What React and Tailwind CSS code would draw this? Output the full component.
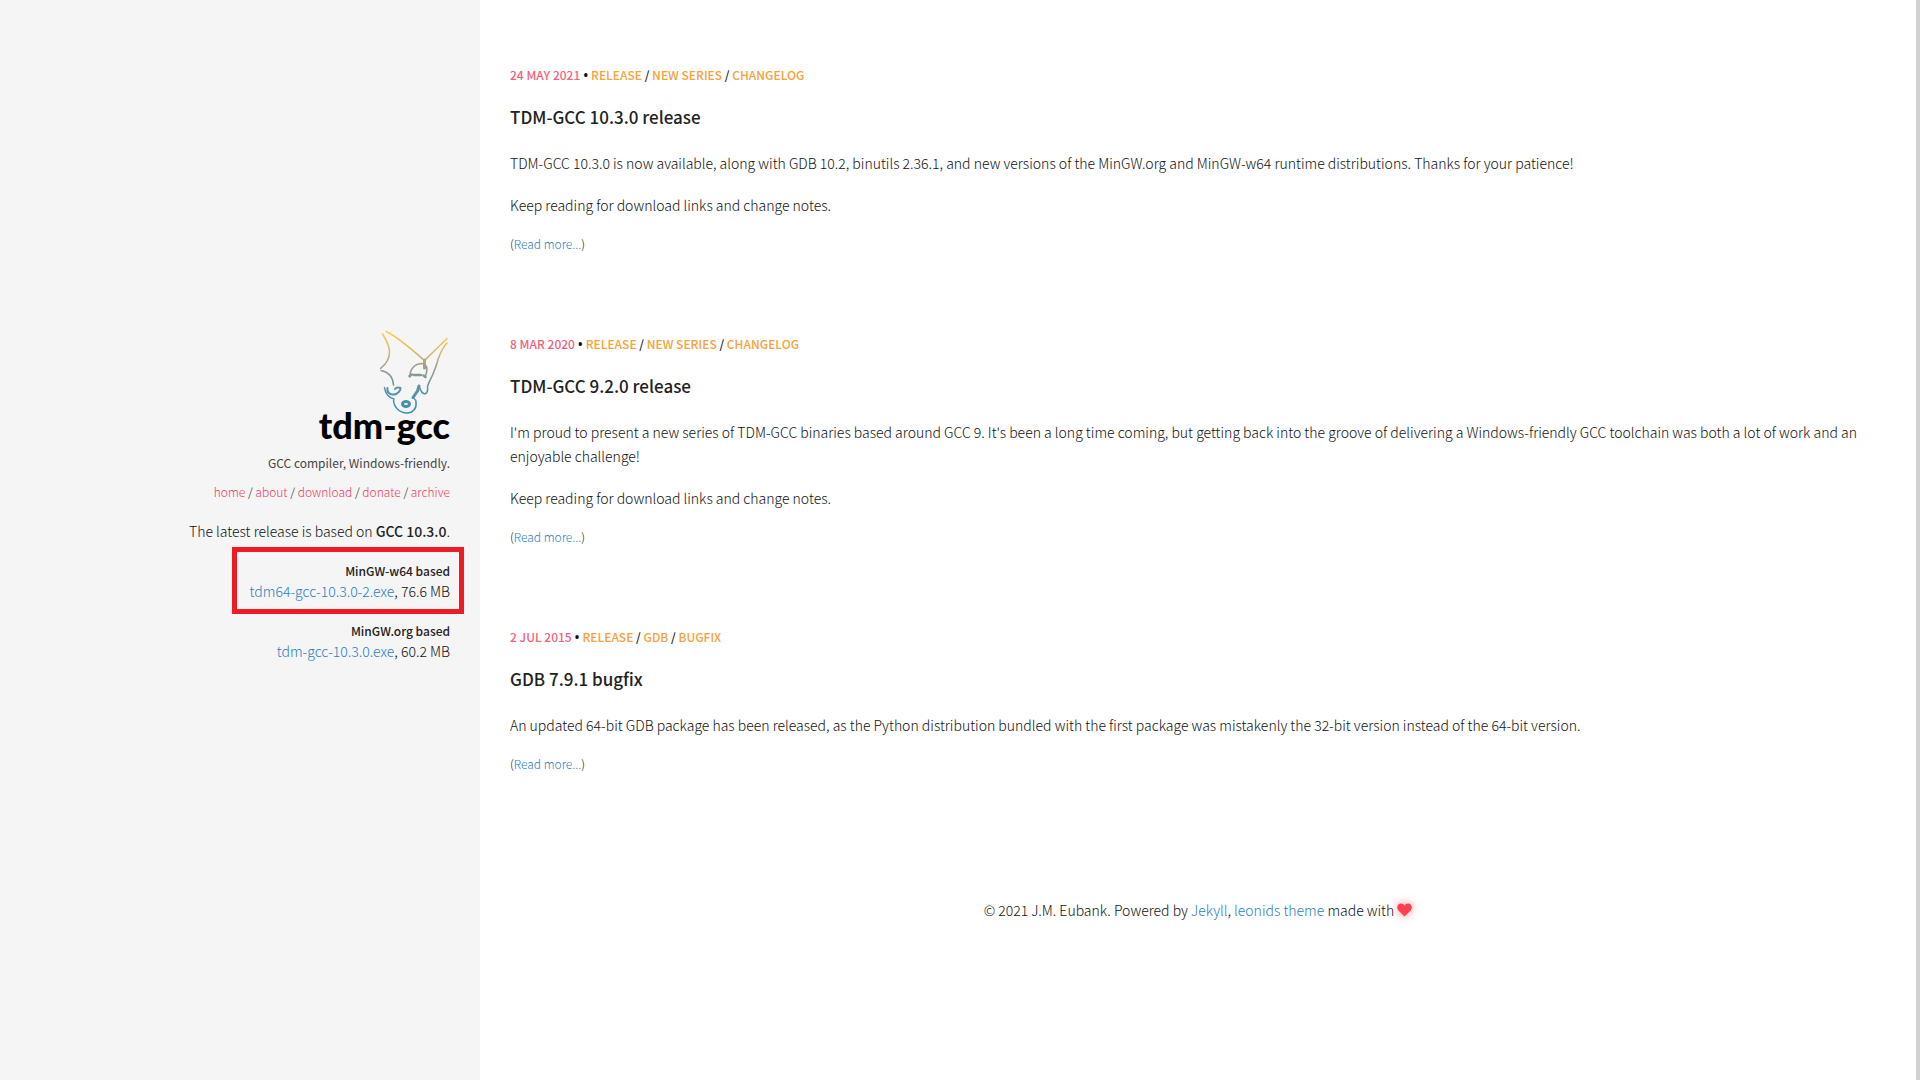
const link = "text-[#2a80bd] hover:underline";

const posts = [
  {
    date: "24 May 2021",
    tags: ["Release", "New Series", "Changelog"],
    title: "TDM-GCC 10.3.0 release",
    body: [
      "TDM-GCC 10.3.0 is now available, along with GDB 10.2, binutils 2.36.1, and new versions of the MinGW.org and MinGW-w64 runtime distributions. Thanks for your patience!",
      "Keep reading for download links and change notes.",
    ],
  },
  {
    date: "8 Mar 2020",
    tags: ["Release", "New Series", "Changelog"],
    title: "TDM-GCC 9.2.0 release",
    body: [
      "I'm proud to present a new series of TDM-GCC binaries based around GCC 9. It's been a long time coming, but getting back into the groove of delivering a Windows-friendly GCC toolchain was both a lot of work and an enjoyable challenge!",
      "Keep reading for download links and change notes.",
    ],
  },
  {
    date: "2 Jul 2015",
    tags: ["Release", "GDB", "Bugfix"],
    title: "GDB 7.9.1 bugfix",
    body: [
      "An updated 64-bit GDB package has been released, as the Python distribution bundled with the first package was mistakenly the 32-bit version instead of the 64-bit version.",
    ],
  },
];

function FoxHead() {
  return (
    <svg width="72" height="88" viewBox="378 328 72 88" fill="none" stroke="url(#fur)" strokeWidth="1.5" strokeLinecap="round" strokeLinejoin="round" aria-hidden="true">
      <defs>
        <linearGradient id="fur" gradientUnits="userSpaceOnUse" x1="0" y1="330" x2="0" y2="414">
          <stop offset="0" stopColor="#ffcf4d" />
          <stop offset="0.25" stopColor="#dcb968" />
          <stop offset="0.45" stopColor="#9c9a90" />
          <stop offset="0.7" stopColor="#5a93a8" />
          <stop offset="1" stopColor="#3590b0" />
        </linearGradient>
      </defs>
      <path d="M382.5 334C387 341 389.500 347 389.500 352C389.500 359 385 365 380.500 368.500" />
      <path d="M386 331.500C397 336 411 349 424.500 360.500L447 338.500" />
      <path d="M447 343C442 348 440 354 438 359.500C437 364 435 369 433 374C431 379 428 383 427.500 387C428 390 427 393 425 394C422 393.500 420.500 391 419.500 387" />
      <path d="M424.500 360V368" strokeWidth="3" />
      <path d="M381 370.500C388 372 393 377 393.500 385" />
      <path d="M410 377C409.500 369 415 363.500 422 363.500C427 364 428.500 369 425 377" />
      <path d="M409.500 376L412 374.500M414 375H421M423.500 375.500L425.500 377" strokeWidth="2.5" />
      <path d="M419 386L417.500 391L413 397.500" strokeWidth="3" />
      <path d="M384.500 387.500C385 393 389 398 394 399" />
      <path d="M387.500 388C386.500 392 390 395 394 394.500C398 394 401 390 400.500 388C398 387 396 387.500 395 389" strokeWidth="2" />
      <path d="M393.500 400C394 408 400 413 407 413C413 413 417 408 416 402C416 400 415 399 413.500 398" />
      <ellipse cx="406" cy="404" rx="3.500" ry="2.500" strokeWidth="3" />
    </svg>
  );
}

function Post({ post }) {
  return (
    <article className="mb-[76px] flex flex-col">
      <div className="text-[12px] leading-6 font-medium uppercase">
        <time className="text-[#f2617a]">{post.date}</time>
        <span className="font-['Open_Sans',sans-serif] font-bold"> • </span>
        {post.tags.map((tag, i) => (
          <span key={tag}>
            {i > 0 && " / "}
            <a href="#tag" className="text-[#f9a13a]">{tag}</a>
          </span>
        ))}
      </div>
      <h2 className="mt-[15px] mb-[2px] text-[17px] leading-7 font-medium text-[#222]">
        <a href="#post">{post.title}</a>
      </h2>
      {post.body.map((text, i) => (
        <p key={i} className="mt-[18px] text-[14px] leading-6">{text}</p>
      ))}
      <p className="mt-[15px] text-[12px] leading-6">
        (<a href="#post" className={link}>Read more...</a>)
      </p>
    </article>
  );
}

export default function App() {
  return (
    <div className="flex min-h-screen bg-white font-['Noto_Sans_CJK_SC','Source_Sans_Pro',sans-serif] text-[14px] font-light text-[#111]">
      <aside className="flex w-1/4 shrink-0 flex-col items-end bg-[#f5f5f5] pt-[328px] pr-[30px] text-right">
        <a href="#home" className="flex flex-col items-end text-black">
          <FoxHead />
          <span className="-mt-[11px] font-['Lato',sans-serif] text-[36px] leading-10 font-black">tdm-gcc</span>
        </a>
        <p className="mt-[6px] text-[12px] leading-6 font-normal text-[#444]">GCC compiler, Windows-friendly.</p>
        <nav className="mt-[5px] text-[12px] leading-6">
          {["home", "about", "download", "donate", "archive"].map((item, i) => (
            <span key={item}>
              {i > 0 && " / "}
              <a href={`#${item}`} className="text-[#f03a5c]">{item}</a>
            </span>
          ))}
        </nav>
        <p className="mt-[15px] leading-6">
          The latest release is based on <strong className="font-medium text-[#222]">GCC 10.3.0</strong>.
        </p>
        <section className="-mr-[14px] mt-1 border-5 border-[#ed1c24] pt-[9px] pr-[9px] pb-2 pl-[13px]">
          <h3 className="text-[12px] leading-5 font-medium text-[#222]">MinGW-w64 based</h3>
          <p className="leading-5"><a href="#tdm64" className={link}>tdm64-gcc-10.3.0-2.exe</a>, 76.6 MB</p>
        </section>
        <section className="mt-[7px]">
          <h3 className="text-[12px] leading-5 font-medium text-[#222]">MinGW.org based</h3>
          <p className="leading-5"><a href="#tdm32" className={link}>tdm-gcc-10.3.0.exe</a>, 60.2 MB</p>
        </section>
      </aside>
      <div className="flex min-w-0 grow flex-col px-[30px] pt-[63px]">
        <main>
          {posts.map((post) => <Post key={post.title} post={post} />)}
        </main>
        <footer className="mt-[46px] flex items-center justify-center gap-[3px] leading-6">
          <span>
            © 2021 J.M. Eubank. Powered by <a href="#jekyll" className={link}>Jekyll</a>, <a href="#leonids" className={link}>leonids theme</a> made with
          </span>
          <svg width="15" height="14" viewBox="0 0 15 14" fill="#ff4050" className="overflow-visible drop-shadow-[0_0_5px_#ff405099]" role="img" aria-label="love">
            <path d="M7.5 13.5L1.2 7.2C-1 4.5.5.5 4 .5C5.6.5 6.8 1.4 7.5 2.4C8.2 1.4 9.4.5 11 .5C14.5.5 16 4.5 13.8 7.2Z" />
          </svg>
        </footer>
      </div>
      <div className="w-1 shrink-0 bg-[#d2d2d2]" />
    </div>
  );
}
